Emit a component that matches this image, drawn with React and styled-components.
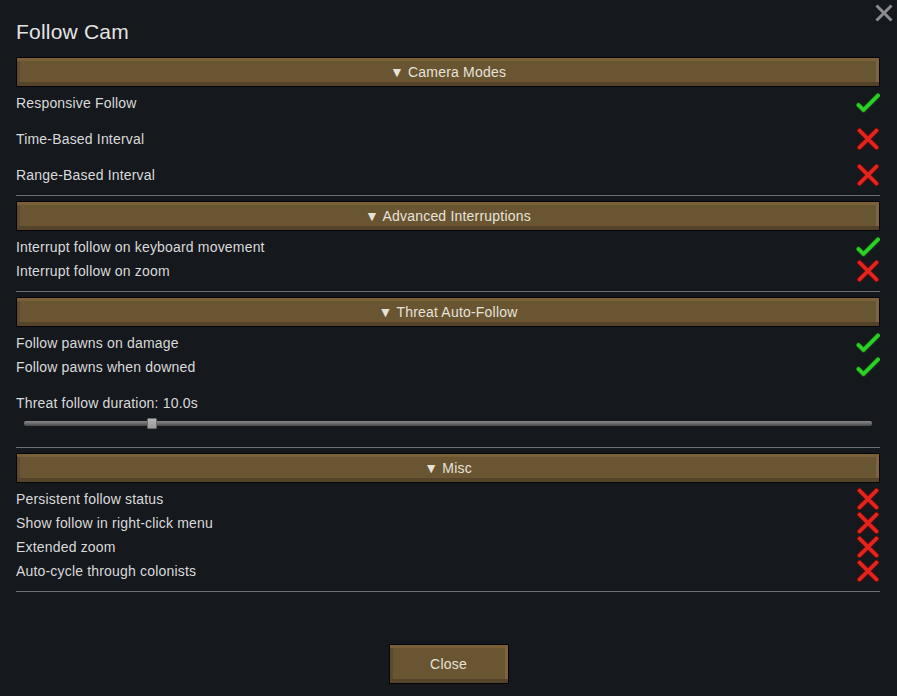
import React from "react";
import styled, { createGlobalStyle } from "styled-components";

const Global = createGlobalStyle`
  html, body { margin: 0; padding: 0; background: #15181d; }
  body { font-family: "Liberation Sans", Arial, sans-serif; }
`;

const Window = styled.div`
  position: relative;
  width: 897px;
  height: 696px;
  box-sizing: border-box;
  background: #15181d;
  padding: 18px 17px 12px 16px;
  display: flex;
  flex-direction: column;
  color: #dcdcdc;
  font-family: "Liberation Sans", Arial, sans-serif;
`;

const Title = styled.h1`
  margin: 0 0 11px 0;
  height: 28px;
  line-height: 28px;
  font-size: 21px;
  letter-spacing: 0.2px;
  font-weight: normal;
  color: #e4e4e4;
`;

const CloseX = styled.button`
  position: absolute;
  top: 2px;
  right: 2px;
  width: 22px;
  height: 22px;
  padding: 0;
  border: none;
  background: none;
  display: flex;
  align-items: center;
  justify-content: center;
`;

const SectionHeader = styled.div`
  height: 30px;
  box-sizing: border-box;
  border: 1px solid #050505;
  background: #6a5532;
  box-shadow: inset 0 3px 0 #7a6039, inset 0 -4px 0 #55432a,
    inset 3px 0 0 #5d4a2c, inset -3px 0 0 #7d643e;
  display: flex;
  align-items: center;
  justify-content: center;
  font-size: 14px;
  letter-spacing: 0.2px;
  color: #e6e2da;
  padding-bottom: 1px;
  margin-bottom: 4px;
`;

const Rows = styled.div`
  display: flex;
  flex-direction: column;
  gap: ${(p) => p.$gap || 0}px;
`;

const Row = styled.div`
  height: 24px;
  display: flex;
  align-items: center;
  justify-content: space-between;
  font-size: 14px;
  letter-spacing: 0.18px;
  color: #dadada;
`;

const IconBox = styled.span`
  width: 24px;
  height: 24px;
  display: flex;
  align-items: center;
  justify-content: center;
`;

const Separator = styled.hr`
  margin: ${(p) => p.$top || 8}px 0 5px 0;
  border: none;
  height: 1px;
  background: #6c6e72;
`;

const SliderLabel = styled(Row)`
  margin-top: 12px;
`;

const SliderWrap = styled.div`
  height: 16px;
  padding: 0 8px;
  display: flex;
  align-items: center;
`;

const Track = styled.div`
  position: relative;
  flex: 1;
  height: 5px;
  border-radius: 2px;
  background: linear-gradient(#8a8a8a, #6a6a6a 50%, #474747);
`;

const Thumb = styled.div`
  position: absolute;
  top: -3px;
  width: 10px;
  height: 11px;
  box-sizing: border-box;
  border: 1px solid #6a6a6a;
  background: linear-gradient(#b4b4b4, #9a9a9a);
  border-radius: 1px;
`;

const Footer = styled.div`
  margin-top: auto;
  display: flex;
  justify-content: center;
`;

const Button = styled.button`
  width: 120px;
  height: 40px;
  box-sizing: border-box;
  border: 1px solid #050505;
  background: #6a5532;
  box-shadow: inset 0 3px 0 #7a6039, inset 0 -4px 0 #55432a,
    inset 3px 0 0 #5d4a2c, inset -3px 0 0 #7d643e;
  color: #e6e2da;
  font-family: "Liberation Sans", Arial, sans-serif;
  font-size: 14px;
  letter-spacing: 0.2px;
  padding: 0 0 1px 0;
  margin-left: 1px;
`;

const Check = () => (
  <svg width="24" height="22" viewBox="0 0 24 22">
    <polyline points="2.5,13 7.5,18 22,3.5" fill="none" stroke="#0f4a0f" strokeWidth="5.5" strokeLinecap="round" strokeLinejoin="round" />
    <polyline points="2.5,13 7.5,18 22,3.5" fill="none" stroke="#2fcf2a" strokeWidth="3.8" strokeLinecap="round" strokeLinejoin="round" />
  </svg>
);

const Cross = () => (
  <svg width="24" height="22" viewBox="0 0 24 22">
    <g fill="none" strokeLinecap="round">
      <path d="M3.5 2.5 L20.5 19.5 M20.5 2.5 L3.5 19.5" stroke="#5a0c0c" strokeWidth="5.5" />
      <path d="M3.5 2.5 L20.5 19.5 M20.5 2.5 L3.5 19.5" stroke="#e3241f" strokeWidth="3.8" />
    </g>
  </svg>
);

const Item = ({ label, on }) => (
  <Row>
    <span>{label}</span>
    <IconBox>{on ? <Check /> : <Cross />}</IconBox>
  </Row>
);

export default function App() {
  return (
    <>
      <Global />
      <Window>
        <CloseX aria-label="close">
          <svg width="20" height="20" viewBox="0 0 20 20">
            <path d="M2.5 2.5 L17.5 17.5 M17.5 2.5 L2.5 17.5" stroke="#8a8c90" strokeWidth="3" />
          </svg>
        </CloseX>
        <Title>Follow Cam</Title>

        <SectionHeader>▼ Camera Modes</SectionHeader>
        <Rows $gap={12}>
          <Item label="Responsive Follow" on />
          <Item label="Time-Based Interval" />
          <Item label="Range-Based Interval" />
        </Rows>
        <Separator />

        <SectionHeader>▼ Advanced Interruptions</SectionHeader>
        <Rows>
          <Item label="Interrupt follow on keyboard movement" on />
          <Item label="Interrupt follow on zoom" />
        </Rows>
        <Separator />

        <SectionHeader>▼ Threat Auto-Follow</SectionHeader>
        <Rows>
          <Item label="Follow pawns on damage" on />
          <Item label="Follow pawns when downed" on />
        </Rows>
        <SliderLabel>Threat follow duration: 10.0s</SliderLabel>
        <SliderWrap>
          <Track>
            <Thumb style={{ left: "123px" }} />
          </Track>
        </SliderWrap>
        <Separator $top={16} />

        <SectionHeader>▼ Misc</SectionHeader>
        <Rows>
          <Item label="Persistent follow status" />
          <Item label="Show follow in right-click menu" />
          <Item label="Extended zoom" />
          <Item label="Auto-cycle through colonists" />
        </Rows>
        <Separator />

        <Footer>
          <Button>Close</Button>
        </Footer>
      </Window>
    </>
  );
}
